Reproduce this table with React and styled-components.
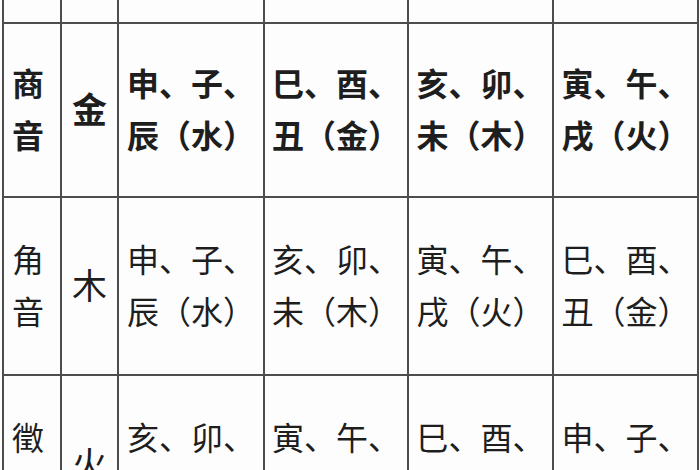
import React from "react";
import styled, { createGlobalStyle } from "styled-components";

const Global = createGlobalStyle`
  html, body { margin: 0; padding: 0; background: #fdfdfd; }
  body { width: 700px; height: 470px; overflow: hidden; }
`;

const Page = styled.div`
  width: 700px;
  height: 470px;
  overflow: hidden;
  padding-left: 2px;
  box-sizing: border-box;
  background: #fdfdfd;
`;

const Grid = styled.div`
  display: grid;
  grid-template-columns: 58px 57px 146px 144px 145px 145px;
  grid-template-rows: 24px 174px 178px 178px;
  border-left: 2px solid #4d4d4d;
  width: max-content;
  font-family: "Noto Sans CJK SC", "Noto Sans CJK JP", sans-serif;
  color: #1e1e1e;
`;

const Cell = styled.div`
  box-sizing: border-box;
  border-right: 2px solid #4d4d4d;
  border-bottom: 2px solid #4d4d4d;
  display: flex;
  align-items: center;
  justify-content: center;
  padding-right: ${(p) => (p.$first ? "8px" : "0")};
  padding-bottom: 4px;
  font-size: ${(p) => (p.$big ? "35px" : "32px")};
  line-height: 52px;
  font-weight: ${(p) => (p.$bold ? 700 : 400)};
  text-align: center;
  white-space: nowrap;
`;

const Lines = styled.div`
  display: flex;
  flex-direction: column;
  align-items: center;
`;

const rows = [
  { bold: true, name: ["商", "音"], el: "金", cells: [["申、子、", "辰（水）"], ["巳、酉、", "丑（金）"], ["亥、卯、", "未（木）"], ["寅、午、", "戌（火）"]] },
  { bold: false, name: ["角", "音"], el: "木", cells: [["申、子、", "辰（水）"], ["亥、卯、", "未（木）"], ["寅、午、", "戌（火）"], ["巳、酉、", "丑（金）"]] },
  { bold: false, name: ["徵", "音"], el: "火", cells: [["亥、卯、", "未（木）"], ["寅、午、", "戌（火）"], ["巳、酉、", "丑（金）"], ["申、子、", "辰（水）"]] },
];

export default function App() {
  return (
    <Page>
      <Global />
      <Grid>
        {Array.from({ length: 6 }).map((_, i) => (
          <Cell key={"h" + i} />
        ))}
        {rows.map((r, ri) => (
          <React.Fragment key={ri}>
            <Cell $bold={r.bold} $first>
              <Lines>
                {r.name.map((t, i) => (
                  <span key={i}>{t}</span>
                ))}
              </Lines>
            </Cell>
            <Cell $bold={r.bold} $big>{r.el}</Cell>
            {r.cells.map((c, ci) => (
              <Cell key={ci} $bold={r.bold}>
                <Lines>
                  {c.map((t, i) => (
                    <span key={i}>{t}</span>
                  ))}
                </Lines>
              </Cell>
            ))}
          </React.Fragment>
        ))}
      </Grid>
    </Page>
  );
}
